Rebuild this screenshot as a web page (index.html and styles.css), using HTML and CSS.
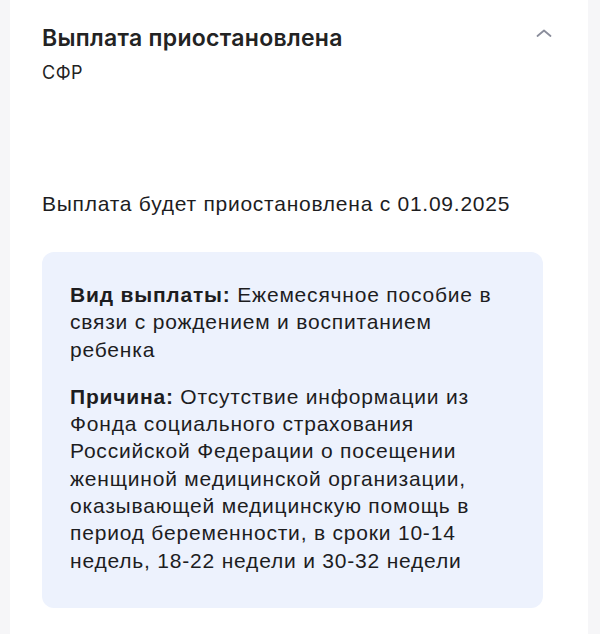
FILE: index.html
```html
<!DOCTYPE html>
<html lang="ru">
<head>
<meta charset="utf-8">
<link rel="stylesheet" href="styles.css">
</head>
<body>
<div class="card">
  <div class="head">
    <div class="head-text">
      <h2 class="title">Выплата приостановлена</h2>
      <div class="sub">СФР</div>
    </div>
    <svg class="chev" width="16" height="10" viewBox="0 0 16 10"><path d="M1.5 8 L8 2.5 L14.5 8" fill="none" stroke="#8a8d9b" stroke-width="1.8" stroke-linecap="round" stroke-linejoin="round"/></svg>
  </div>
  <p class="status">Выплата будет приостановлена с 01.09.2025</p>
  <div class="info">
    <p class="row"><b>Вид выплаты:</b> Ежемесячное пособие в связи с рождением и воспитанием ребенка</p>
    <p class="row"><b>Причина:</b> Отсутствие информации из Фонда социального страхования Российской Федерации о посещении женщиной медицинской организации, оказывающей медицинскую помощь в период беременности, в сроки 10-14 недель, 18-22 недели и 30-32 недели</p>
  </div>
</div>
</body>
</html>
```
FILE: styles.css
```css
html, body {
  margin: 0;
  padding: 0;
  background: #f6f6f8;
}
body {
  height: 634px;
  overflow: hidden;
}
.card {
  margin-left: 10px;
  width: 578px;
  box-sizing: border-box;
  background: #ffffff;
  padding: 22px 45px 40px 32px;
  min-height: 634px;
}
.head {
  display: flex;
  justify-content: space-between;
  align-items: flex-start;
}
.title {
  margin: 0;
  font-family: Inter, "Noto Sans", sans-serif;
  font-weight: 600;
  font-size: 23px;
  line-height: 32px;
  color: #232323;
  letter-spacing: 0.3px;
}
.sub {
  margin-top: 8px;
  font-family: Inter, "Noto Sans", sans-serif;
  font-size: 18px;
  line-height: 22px;
  letter-spacing: 0.5px;
  color: #232323;
}
.chev {
  margin-top: 6px;
  margin-right: -9px;
}
.status {
  margin: 106px 0 0;
  font-family: "Liberation Sans", Arial, sans-serif;
  font-size: 21px;
  line-height: 27px;
  letter-spacing: 0.75px;
  color: #1d1d1f;
}
.info {
  margin-top: 35px;
  background: #edf2fd;
  border-radius: 12px;
  padding: 29px 44px 34px 28px;
}
.row {
  margin: 0;
  font-family: "Liberation Sans", Arial, sans-serif;
  font-size: 21px;
  line-height: 27.3px;
  letter-spacing: 0.8px;
  color: #1d1d1f;
}
.row + .row {
  margin-top: 20px;
}
.row b {
  font-weight: 700;
}
```
